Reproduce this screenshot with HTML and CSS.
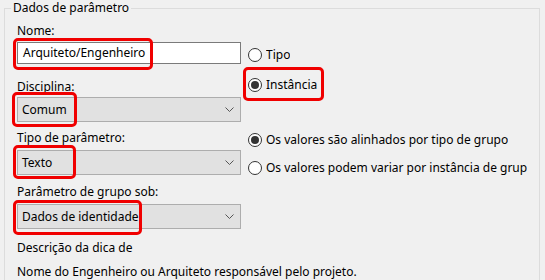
FILE: index.html
```html
<!DOCTYPE html>
<html lang="pt">
<head>
    <meta charset="UTF-8">
    <title>Dados de parâmetro</title>
    <link rel="stylesheet" href="styles.css">
</head>
<body>
    <fieldset class="group">
        <legend>Dados de parâmetro</legend>
        <div class="cols">
            <div class="left">
                <label class="lbl">Nome:</label>
                <div class="field field-text">
                    <div class="textbox">Arquiteto/Engenheiro</div>
                    <span class="mark mark-name"></span>
                </div>

                <label class="lbl lbl-disc">Disciplina:</label>
                <div class="field field-disc">
                    <div class="select">
                        <span>Comum</span>
                        <svg class="chev" width="9" height="6" viewBox="0 0 9 6"><path d="M0.5 0.5 L4.5 4.5 L8.5 0.5" fill="none" stroke="#555" stroke-width="1"/></svg>
                    </div>
                    <span class="mark mark-comum"></span>
                </div>

                <label class="lbl lbl-tipo">Tipo de parâmetro:</label>
                <div class="field field-tipo">
                    <div class="select">
                        <span>Texto</span>
                        <svg class="chev" width="9" height="6" viewBox="0 0 9 6"><path d="M0.5 0.5 L4.5 4.5 L8.5 0.5" fill="none" stroke="#555" stroke-width="1"/></svg>
                    </div>
                    <span class="mark mark-texto"></span>
                </div>

                <label class="lbl lbl-grupo">Parâmetro de grupo sob:</label>
                <div class="field field-grupo">
                    <div class="select">
                        <span>Dados de identidade</span>
                        <svg class="chev" width="9" height="6" viewBox="0 0 9 6"><path d="M0.5 0.5 L4.5 4.5 L8.5 0.5" fill="none" stroke="#555" stroke-width="1"/></svg>
                    </div>
                    <span class="mark mark-dados"></span>
                </div>

                <div class="note note-head">Descrição da dica de</div>
                <div class="note note-text">Nome do Engenheiro ou Arquiteto responsável pelo projeto.</div>
            </div>

            <div class="right">
                <div class="radio">
                    <span class="dot"></span>
                    <span class="rlabel">Tipo</span>
                </div>
                <div class="radio radio-inst">
                    <span class="dot checked"></span>
                    <span class="rlabel">Instância</span>
                    <span class="mark mark-inst"></span>
                </div>
                <div class="radio radio-alinh">
                    <span class="dot checked"></span>
                    <span class="rlabel">Os valores são alinhados por tipo de grupo</span>
                </div>
                <div class="radio radio-var">
                    <span class="dot"></span>
                    <span class="rlabel">Os valores podem variar por instância de grupo</span>
                </div>
            </div>
        </div>
    </fieldset>
</body>
</html>
```

FILE: styles.css
```css
:root {
    --bg: #f0f0f0;
    --frame: #dcdcdc;
    --text: #000;
    --control: #e1e1e1;
    --control-border: #adadad;
    --edit-border: #7a7a7a;
    --mark: #f00000;
}

body {
    margin: 0;
    background: var(--bg);
    color: var(--text);
    font-family: "Noto Sans", sans-serif;
    font-size: 12px;
    line-height: 16px;
    overflow: hidden;
}

.group {
    box-sizing: border-box;
    width: 536px;
    height: 320px;
    margin: 0 0 0 4px;
    padding: 7px 12px 0 12px;
    border: 1px solid var(--frame);
    min-width: 0;
}

.group legend {
    padding: 0 2px;
    margin-left: -6px;
    line-height: 16px;
}

.cols {
    display: grid;
    grid-template-columns: 224px 1fr;
    column-gap: 7px;
}

.left {
    display: flex;
    flex-direction: column;
}

.lbl {
    display: block;
    height: 16px;
}

.lbl-disc { margin-top: 15px; }
.lbl-tipo { margin-top: 8px; }
.lbl-grupo { margin-top: 9px; }

.field {
    position: relative;
}

.field-text { margin-top: 3px; }
.field-disc { margin-top: 2px; }
.field-tipo,
.field-grupo { margin-top: 4px; }

.textbox {
    box-sizing: border-box;
    height: 22px;
    padding: 0 5px;
    line-height: 20px;
    background: #fff;
    border: 1px solid var(--edit-border);
}

.select {
    box-sizing: border-box;
    height: 25px;
    display: flex;
    align-items: center;
    justify-content: space-between;
    padding: 0 6px 0 4px;
    background: var(--control);
    border: 1px solid var(--control-border);
}

.chev {
    display: block;
}

.note-head { margin-top: 11px; }
.note-text {
    margin-top: 8px;
    white-space: nowrap;
}

/* red annotation frames drawn over the controls */
.mark {
    position: absolute;
    border: 3px solid var(--mark);
    border-radius: 5px;
    box-sizing: border-box;
    pointer-events: none;
}

.mark-name { left: -4px; top: -4px; width: 140px; height: 32px; }
.mark-comum { left: -5px; top: -5px; width: 65px; height: 35px; }
.mark-texto { left: -4px; top: -5px; width: 63px; height: 34px; }
.mark-dados { left: -4px; top: -4px; width: 129px; height: 35px; }
.mark-inst { left: -5px; top: -8px; width: 81px; height: 34px; }

.right {
    display: flex;
    flex-direction: column;
    padding-top: 22px;
    min-width: 0;
}

.radio {
    position: relative;
    display: flex;
    align-items: center;
    gap: 4px;
    height: 20px;
    white-space: nowrap;
}

.radio-inst { margin-top: 10px; }
.radio-alinh { margin-top: 35px; }
.radio-var { margin-top: 8px; }

.rlabel {
    overflow: hidden;
    min-width: 0;
}

.dot {
    flex: none;
    box-sizing: border-box;
    width: 14px;
    height: 14px;
    border: 1px solid #333;
    border-radius: 50%;
    background: #fff;
    display: flex;
    align-items: center;
    justify-content: center;
}

.dot.checked::after {
    content: "";
    width: 8px;
    height: 8px;
    border-radius: 50%;
    background: #333;
}
```
